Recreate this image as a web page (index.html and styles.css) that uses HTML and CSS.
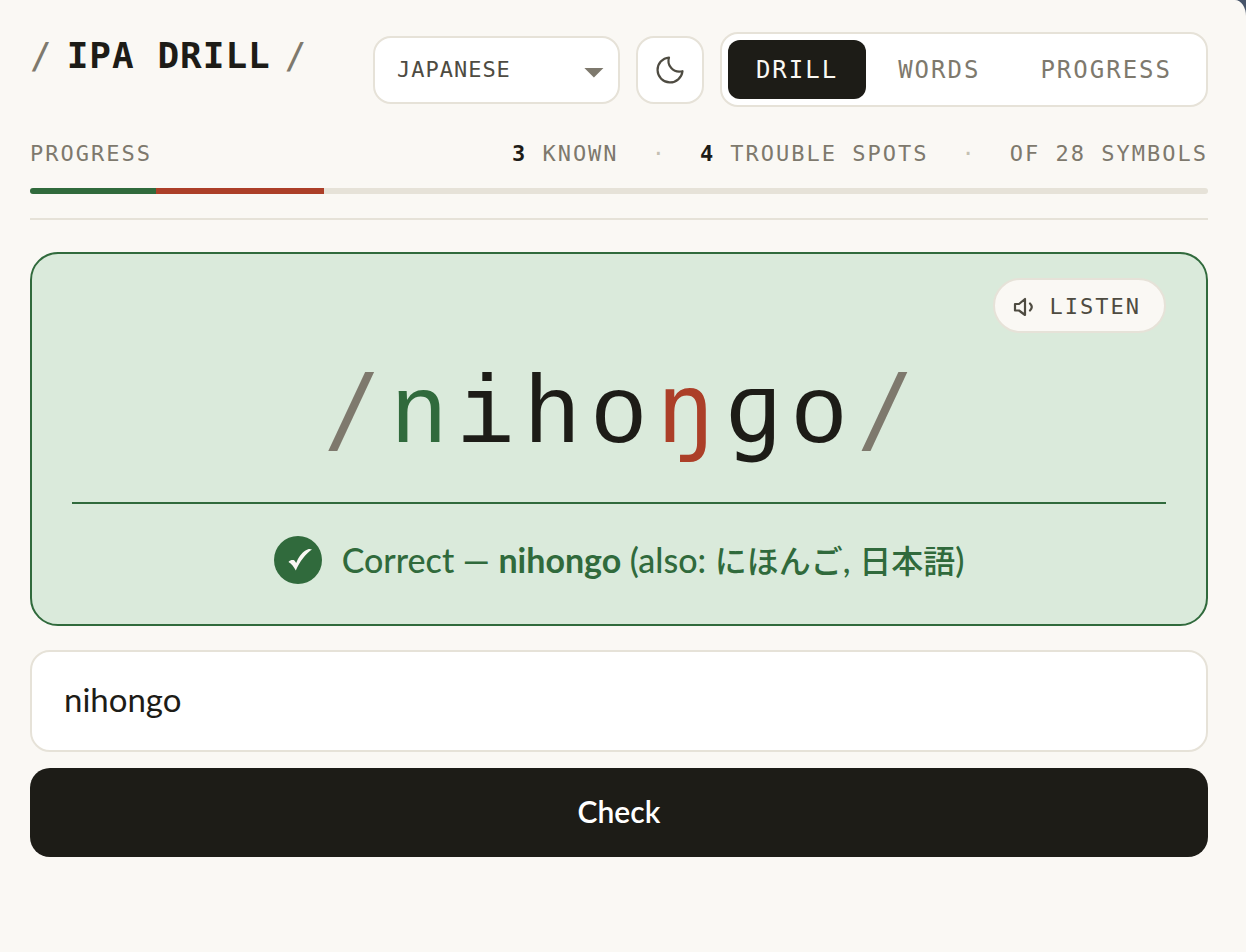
FILE: index.html
```html
<!DOCTYPE html>
<html lang="en">
<head>
<meta charset="utf-8">
<meta name="viewport" content="width=device-width, initial-scale=1">
<title>IPA Drill</title>
<link rel="stylesheet" href="styles.css">
</head>
<body>
<div class="page">
  <header class="header">
    <h1 class="brand"><span class="slash">/</span><span>IPA DRILL</span><span class="slash">/</span></h1>
    <div class="controls">
      <div class="language">
        <select class="language-select" aria-label="Language">
          <option>JAPANESE</option>
        </select>
        <span class="language-arrow"></span>
      </div>
      <button class="theme" type="button" aria-label="Dark theme">
        <svg width="30" height="30" viewBox="0 0 30 30" fill="none" stroke="currentColor" stroke-width="2.200" stroke-linecap="round" stroke-linejoin="round"><path d="M27.500 16.200A12.500 12.500 0 1 1 14 2.500C11.500 10 18 18.500 27.500 16.200z"/></svg>
      </button>
      <nav class="tabs">
        <button class="tab tab-active" type="button">DRILL</button>
        <button class="tab" type="button">WORDS</button>
        <button class="tab" type="button">PROGRESS</button>
      </nav>
    </div>
  </header>

  <section class="progress">
    <div class="progress-labels">
      <span>PROGRESS</span>
      <div class="stats">
        <span><strong>3</strong> KNOWN</span>
        <span class="dot">·</span>
        <span><strong>4</strong> TROUBLE SPOTS</span>
        <span class="dot">·</span>
        <span>OF 28 SYMBOLS</span>
      </div>
    </div>
    <div class="bar">
      <div class="bar-known" style="width:10.714%"></div>
      <div class="bar-trouble" style="width:14.286%"></div>
    </div>
  </section>

  <main class="drill">
    <section class="card">
      <button class="listen" type="button">
        <svg width="22" height="22" viewBox="0 0 22 22" fill="none" stroke="currentColor" stroke-width="2.200" stroke-linejoin="round" stroke-linecap="round"><path d="M3 8h4l6-5v16l-6-4.500H3z"/><path d="M18 7.500q3.500 3.500 0 7"/></svg>
        <span>LISTEN</span>
      </button>
      <div class="word"><span class="slash">/</span><span class="known">n</span>iho<span class="trouble">ŋ</span><span class="ipa">ɡ</span>o<span class="slash">/</span></div>
      <div class="feedback">
        <span class="check"><svg width="24" height="24" viewBox="0 0 24 24" fill="currentColor"><path d="M2.500 14C4 12 7 11.500 8.500 12.500L10.200 15C12 10 15.500 5 19.500 2.500C21.500 1 24 .5 26 1.500C20.500 5 13.500 13.500 9.800 22.500C8 19 5.500 15.500 2.500 14z"/></svg></span>
        <span>Correct — <b>nihongo</b> (also: <span class="kana" lang="ja">にほんご</span>, <span class="kana" lang="ja">日本語</span>)</span>
      </div>
    </section>
    <form class="answer">
      <input class="answer-input" type="text" aria-label="Your answer" value="nihongo">
      <button class="submit" type="button">Check</button>
    </form>
  </main>
</div>
</body>
</html>
```
FILE: styles.css
```css
:root {
  --paper: #faf8f4;
  --ink: #1d1c17;
  --text: #4e4b41;
  --muted: #7e796d;
  --line: #e6e2d8;
  --green: #306a3c;
  --red: #ac3f28;
  --mono: "DejaVu Sans Mono", monospace;
  --sans: Lato, "Noto Sans CJK JP", sans-serif;
}
* { box-sizing: border-box; }
body {
  margin: 0;
  background: #475469;
  color: var(--ink);
  font-family: var(--sans);
}
button, input, select { font: inherit; color: inherit; margin: 0; }
.page {
  min-height: 100vh;
  padding: 32px 38px 32px 30px;
  background: var(--paper);
  border-top-right-radius: 11px 16px;
}
.header {
  display: flex;
  justify-content: space-between;
  align-items: flex-start;
}
.brand {
  display: flex;
  gap: 14px;
  margin: 0;
  font: 700 36px/48px var(--mono);
  letter-spacing: 1px;
}
.slash { color: var(--muted); font-weight: 400; }
.controls { display: flex; align-items: center; gap: 16px; }
.language { position: relative; }
.language-select {
  appearance: none;
  width: 247px;
  height: 68px;
  padding: 0 48px 0 22px;
  border: 2px solid var(--line);
  border-radius: 18px;
  background: #fff;
  color: var(--text);
  font: 22px/28px var(--mono);
  letter-spacing: 1px;
}
.language-arrow {
  position: absolute;
  right: 16px;
  top: 32px;
  width: 20px;
  height: 10px;
  background: var(--muted);
  clip-path: polygon(0 0, 100% 0, 50% 100%);
  pointer-events: none;
}
.theme {
  display: grid;
  place-items: center;
  width: 68px;
  height: 68px;
  padding: 0;
  border: 2px solid var(--line);
  border-radius: 18px;
  background: #fff;
  color: var(--text);
}
.tabs {
  display: flex;
  gap: 4px;
  padding: 6px;
  border: 2px solid var(--line);
  border-radius: 18px;
  background: #fff;
}
.tab {
  padding: 15px 28px 13px;
  border: 0;
  border-radius: 12px;
  background: none;
  color: var(--muted);
  font: 24px/31px var(--mono);
  letter-spacing: 2px;
}
.tab-active { background: var(--ink); color: var(--paper); }
.progress {
  padding: 32px 0 24px;
  border-bottom: 2px solid var(--line);
}
.progress-labels {
  display: flex;
  justify-content: space-between;
  margin-bottom: 19px;
  color: var(--muted);
  font: 22px/30px var(--mono);
  letter-spacing: 2px;
}
.stats { display: flex; gap: 33px; }
.stats strong { color: var(--ink); }
.dot { color: #c5c0b2; }
.bar {
  display: flex;
  height: 6px;
  overflow: hidden;
  border-radius: 3px;
  background: var(--line);
}
.bar-known { background: var(--green); }
.bar-trouble { background: var(--red); }
.drill { padding-top: 32px; }
.card {
  display: flex;
  flex-direction: column;
  padding: 24px 40px 40px;
  border: 2px solid var(--green);
  border-radius: 28px;
  background: #daeadb;
}
.listen {
  display: flex;
  align-items: center;
  align-self: flex-end;
  gap: 16px;
  padding: 12px 23px 10px 17px;
  border: 2px solid var(--line);
  border-radius: 28px;
  background: var(--paper);
  color: var(--text);
  font: 22px/29px var(--mono);
  letter-spacing: 2px;
}
.word {
  padding: 28px 0 29px 9px;
  border-bottom: 2px solid var(--green);
  font: 96px/112px "Liberation Mono", monospace;
  letter-spacing: 9px;
  text-align: center;
}
.known { color: var(--green); }
.trouble { color: var(--red); }
.trouble, .ipa, .word .slash { font-family: var(--mono); line-height: 1; }
.feedback {
  display: flex;
  align-items: center;
  justify-content: center;
  gap: 20px;
  padding-top: 32px;
  color: var(--green);
  font-size: 34px;
  font-weight: 500;
  line-height: 48px;
}
.feedback b { font-weight: 700; }
.kana { font-size: 32px; line-height: 1; }
.check {
  display: grid;
  place-items: center;
  width: 48px;
  height: 48px;
  border-radius: 50%;
  background: var(--green);
  color: var(--paper);
}
.check svg { overflow: visible; }
.answer {
  display: flex;
  flex-direction: column;
  gap: 16px;
  margin-top: 24px;
}
.answer-input {
  width: 100%;
  height: 102px;
  padding: 0 32px 4px;
  border: 2px solid var(--line);
  border-radius: 20px;
  background: #fff;
  font-size: 33px;
}
.submit {
  padding: 25px 26px 27px;
  border: 0;
  border-radius: 20px;
  background: var(--ink);
  color: #fff;
  font-size: 30px;
  font-weight: 600;
  line-height: 37px;
}
```
